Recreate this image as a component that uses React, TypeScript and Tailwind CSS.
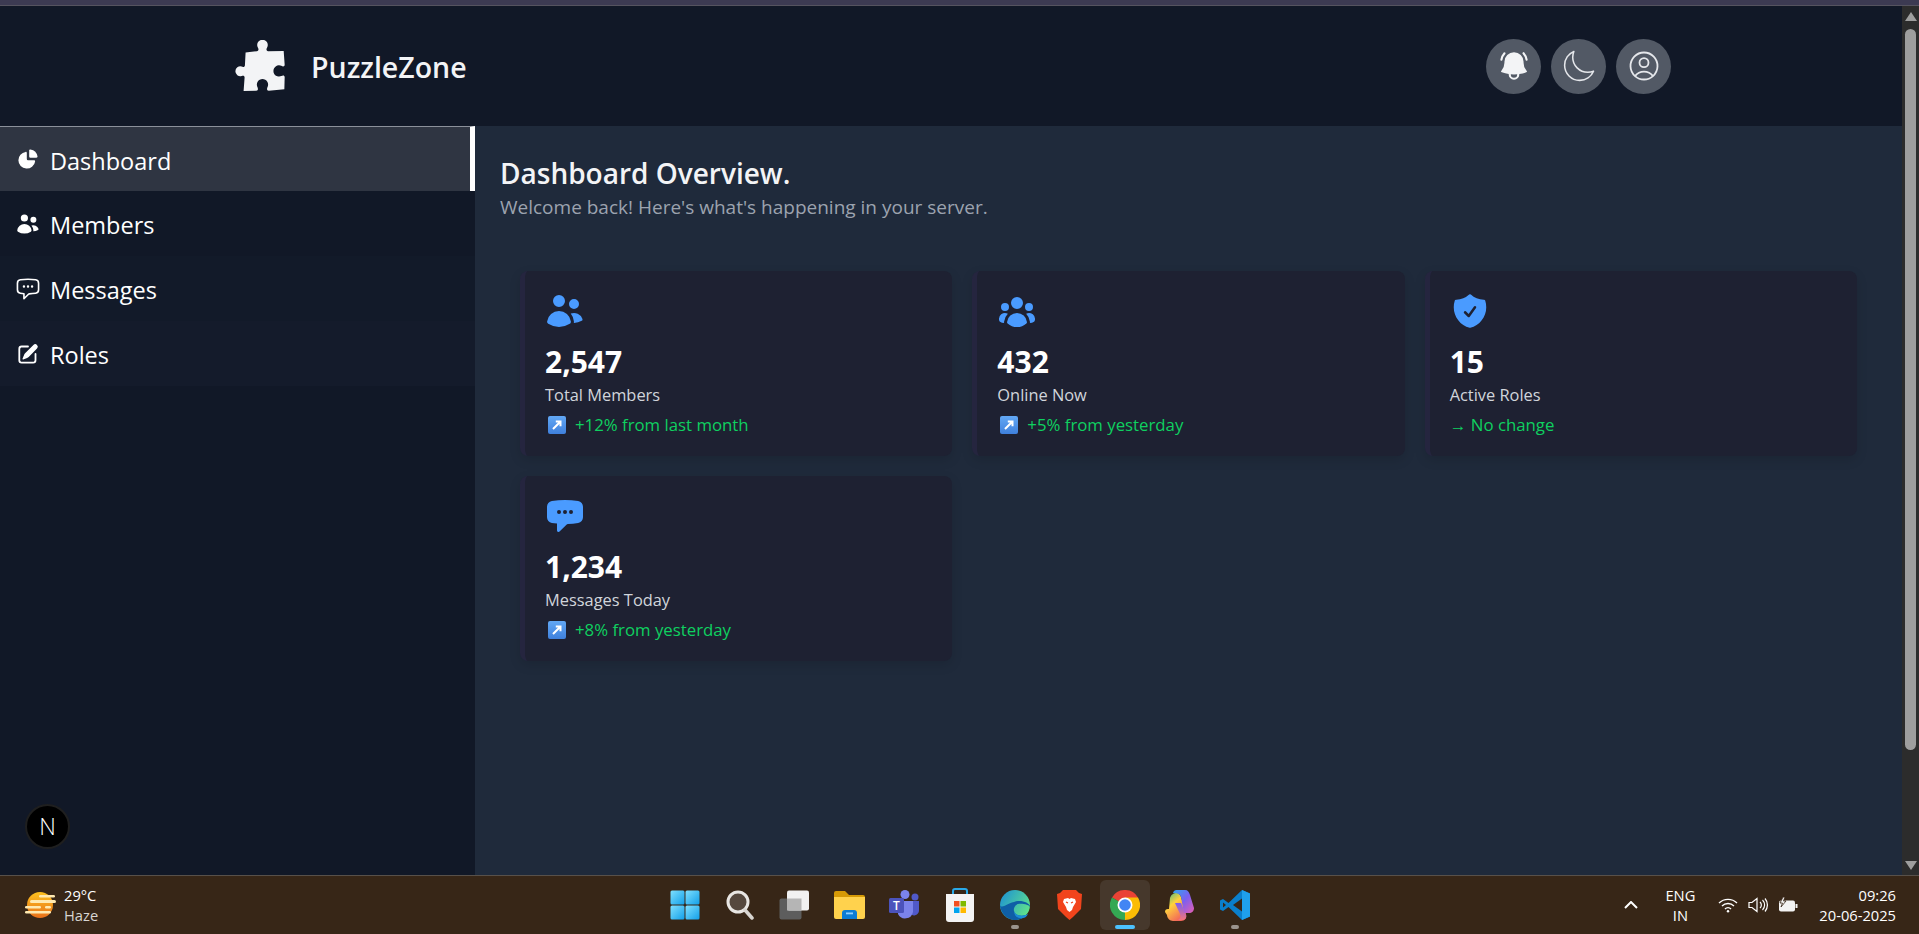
import React from "react";
import {
  HiMiniChartPie,
  HiMiniUsers,
  HiOutlineChatBubbleLeftEllipsis,
  HiMiniPencilSquare,
  HiMiniUserGroup,
  HiShieldCheck,
  HiMiniChatBubbleLeftEllipsis,
  HiBellAlert,
  HiOutlineMoon,
  HiOutlineUserCircle,
} from "react-icons/hi2";

const Puzzle = () => (
  <svg width="53" height="53" viewBox="700 115 160 160">
    <path
      d="M738 153L772 149C778 148 778 143 775 138A16 16 0 1 1 803 138C800 143 800 148 806 149L853 148L856 190C856 196 850 196 846 193A17 17 0 1 0 846 224C850 221 856 221 856 227L855 264L808 268C802 268 802 262 804 258A17 17 0 1 0 774 258C776 262 776 268 770 268L732 269L735 228C735 222 730 222 726 224A15 15 0 1 1 726 195C730 197 736 197 736 191Z"
      fill="#f3f4f6"
    />
  </svg>
);

const Up = () => (
  <svg width="18" height="18" viewBox="0 0 18 18" className="shrink-0">
    <defs>
      <linearGradient id="u" x1="0" y1="0" x2="0" y2="1">
        <stop offset="0" stopColor="#62a8f5" />
        <stop offset="1" stopColor="#3f80dc" />
      </linearGradient>
    </defs>
    <rect x="0" y="0" width="18" height="18" rx="2" fill="url(#u)" />
    <path d="M5 13L11.500 6.500M7.800 5.500H12.500V10.200" stroke="#fff" strokeWidth="2" fill="none" />
  </svg>
);

function Card({ icon, value, label, change, arrow }: { icon: React.ReactNode; value: string; label: string; change: string; arrow?: boolean }) {
  return (
    <div className="h-[185px] rounded-lg border-l-[5px] border-[#25253f] bg-[#1e2132] pl-[20px] pt-[20px] shadow-[0_4px_12px_rgba(0,0,0,0.12)]">
      <div className="h-[40px] text-[#4a9bff]">{icon}</div>
      <div className="mt-[13px] text-[30px] font-bold leading-[36px] text-white">{value}</div>
      <div className="mt-[3px] text-[16.400px] leading-[24px] text-[#d1d5db]">{label}</div>
      <div className="mt-[6px] flex h-[24px] items-center gap-[9px] pl-[3px] text-[16.800px] text-[#0fd060]">
        {arrow ? <Up /> : null}
        <span className={arrow ? "" : "-ml-[3px]"}>{change}</span>
      </div>
    </div>
  );
}

function NavItem({ icon, label, active, bg }: { icon: React.ReactNode; label: string; active?: boolean; bg?: string }) {
  return (
    <div className={`flex h-[65px] items-center pl-[16px] text-[23.500px] text-white ${active ? "border-r-[5px] border-t border-r-white border-t-[#8b909a] bg-[#2f3542]" : ""} ${bg ?? ""}`}>
      <span className="flex w-[34px] shrink-0 items-center">{icon}</span>
      <span className="pt-[5px]">{label}</span>
    </div>
  );
}

const RoundBtn = ({ children }: { children: React.ReactNode }) => (
  <div className="flex h-[55px] w-[55px] items-center justify-center rounded-full bg-[#525965] text-[#e5e7eb]">{children}</div>
);

const Slot = ({ children, active, dot }: { children: React.ReactNode; active?: boolean; dot?: boolean }) => (
  <div className={`relative flex h-[50px] w-[50px] items-center justify-center rounded-md ${active ? "bg-[#46382c]" : ""}`}>
    {children}
    {active ? <span className="absolute bottom-[1px] left-[15px] h-[4px] w-[20px] rounded-full bg-[#4cc2ff]" /> : null}
    {dot ? <span className="absolute bottom-[1px] left-[21px] h-[4px] w-[8px] rounded-full bg-[#9a938c]" /> : null}
  </div>
);

const Win = () => (
  <svg width="30" height="30" viewBox="0 0 30 30">
    <defs>
      <linearGradient id="w" x1="0" y1="0" x2="1" y2="1">
        <stop offset="0" stopColor="#7fe0ff" />
        <stop offset="1" stopColor="#129fe8" />
      </linearGradient>
    </defs>
    <rect x="0.500" y="0.500" width="14" height="14" rx="1.500" fill="url(#w)" />
    <rect x="15.500" y="0.500" width="14" height="14" rx="1.500" fill="url(#w)" />
    <rect x="0.500" y="15.500" width="14" height="14" rx="1.500" fill="url(#w)" />
    <rect x="15.500" y="15.500" width="14" height="14" rx="1.500" fill="url(#w)" />
  </svg>
);
const Search = () => (
  <svg width="28" height="30" viewBox="0 0 28 30">
    <circle cx="12" cy="12" r="10" fill="#55483e" stroke="#e8e6e3" strokeWidth="3" />
    <path d="M19 20l7 8" stroke="#d8d5d1" strokeWidth="3.500" strokeLinecap="round" />
  </svg>
);
const TaskView = () => (
  <svg width="31" height="30" viewBox="0 0 31 30">
    <rect x="0.500" y="8.500" width="22" height="21" rx="2" fill="#5d5d5d" />
    <rect x="8" y="0.500" width="22" height="20" rx="2" fill="#f1f1f1" />
    <rect x="8" y="8.500" width="14.500" height="12" fill="#b5b5b5" />
  </svg>
);
const Folder = () => (
  <svg width="31" height="28" viewBox="0 0 31 28">
    <path d="M0 2a2 2 0 0 1 2-2h9l4 4h14a2 2 0 0 1 2 2v4H0z" fill="#d69a06" />
    <path d="M0 6h31v20a2 2 0 0 1-2 2H2a2 2 0 0 1-2-2z" fill="#ffd24d" />
    <path d="M8 28v-6a3 3 0 0 1 3-3h9a3 3 0 0 1 3 3v6z" fill="#0c7cd5" />
    <rect x="12" y="21.500" width="7" height="1.800" fill="#8fd0ff" />
  </svg>
);
const Teams = () => (
  <svg width="31" height="30" viewBox="0 0 31 30">
    <circle cx="16" cy="4.500" r="4.500" fill="#7b83eb" />
    <circle cx="26" cy="7" r="3.500" fill="#5059c9" />
    <path d="M21 11h9v9a5 5 0 0 1-7 5z" fill="#5059c9" />
    <path d="M9 11h15v11a8 8 0 0 1-15 2z" fill="#7b83eb" />
    <rect x="0" y="8" width="15" height="15" rx="1.500" fill="#4b53bc" />
    <text x="7.500" y="20" textAnchor="middle" fontSize="12" fontFamily="Open Sans" fontWeight="600" fill="#fff">T</text>
  </svg>
);
const Store = () => (
  <svg width="30" height="34" viewBox="0 0 30 34">
    <path d="M8 8V3a2 2 0 0 1 2-2h10a2 2 0 0 1 2 2v5" fill="none" stroke="#2aa9e8" strokeWidth="2" />
    <path d="M1 6h28v25a3 3 0 0 1-3 3H4a3 3 0 0 1-3-3z" fill="#f4f4f4" />
    <rect x="9" y="13" width="5.500" height="5.500" fill="#f25022" />
    <rect x="15.500" y="13" width="5.500" height="5.500" fill="#7fba00" />
    <rect x="9" y="19.500" width="5.500" height="5.500" fill="#00a4ef" />
    <rect x="15.500" y="19.500" width="5.500" height="5.500" fill="#ffb900" />
  </svg>
);
const Edge = () => (
  <svg width="30" height="30" viewBox="0 0 30 30">
    <defs>
      <linearGradient id="e" x1="0" y1="0" x2="1" y2="0.600">
        <stop offset="0" stopColor="#1a8ed8" />
        <stop offset="1" stopColor="#5ee08c" />
      </linearGradient>
    </defs>
    <circle cx="15" cy="15" r="15" fill="url(#e)" />
    <path d="M0 15C1 26 10 31 17 30 c5-1 9-3 11-6-5 3-13 2-14-3-1-4 3-7 4-7 4-1 12 1 12 3 1-3-8-8-16-5C6 14 2 19 0 15z" fill="#0f5fa6" />
    <path d="M14 21c1 5 9 6 14 3-1 2-2 3-3 3.500-5 2-11 0-11-6.500z" fill="#1a8ed8" />
  </svg>
);
const Brave = () => (
  <svg width="25" height="30" viewBox="0 0 25 30">
    <path d="M6 0h13l3 3 3 1-1 15-8 8-3.500 3-3.500-3-8-8L0 4l3-1z" fill="#f1441c" />
    <path d="M7 9l4-1 1.500 1L14 8l4 1 1 3-3 5-1 3-2.500 2L10 20l-1-3-3-5z" fill="#fff" />
    <path d="M9 12l2 1M16 12l-2 1" stroke="#f1441c" strokeWidth="1.200" />
  </svg>
);
const Chrome = () => (
  <svg width="30" height="30" viewBox="0 0 30 30">
    <path d="M15 15L2 7.500A15 15 0 0 1 28 7.500z" fill="#ea4335" />
    <path d="M15 15l-13-7.500A15 15 0 0 0 15 30z" fill="#34a853" />
    <path d="M15 7.500h13A15 15 0 0 1 15 30z" fill="#fbbc05" />
    <circle cx="15" cy="15" r="7.500" fill="#fff" />
    <circle cx="15" cy="15" r="5.800" fill="#4285f4" />
  </svg>
);
const Copilot = () => (
  <svg width="29" height="31" viewBox="0 0 29 31">
    <defs>
      <linearGradient id="c1" x1="0" y1="0" x2="1" y2="1">
        <stop offset="0" stopColor="#2ea7f2" />
        <stop offset="0.500" stopColor="#7c5ff0" />
        <stop offset="1" stopColor="#e65fb0" />
      </linearGradient>
      <linearGradient id="c2" x1="0" y1="0" x2="0.600" y2="1">
        <stop offset="0" stopColor="#35b88a" />
        <stop offset="0.450" stopColor="#ffd23c" />
        <stop offset="1" stopColor="#f2655a" />
      </linearGradient>
      <linearGradient id="c3" x1="0" y1="0" x2="0" y2="1">
        <stop offset="0" stopColor="#7c5ff0" />
        <stop offset="1" stopColor="#f2757a" />
      </linearGradient>
    </defs>
    <path d="M5 8c1-3 3-5 7-5 2 0 3 2 4 4l5 17c1 4-1 7-5 7H8c-3 0-6-3-6-6L0 22c0-2 1-3 3-3h1z" fill="url(#c2)" />
    <path d="M10 13h6l5 12c1 3-1 5-4 5h-4c2-1 3-3 2-6z" fill="url(#c3)" />
    <path d="M8 3a4 4 0 0 1 4-3h8c3 0 4 2 5 5l4 13c0 3-2 5-5 5h-5L16 7c-1-3-3-4-8-4z" fill="url(#c1)" />
  </svg>
);
const VSCode = () => (
  <svg width="30" height="30" viewBox="0 0 30 30">
    <path d="M22 0l8 3.500v23L22 30 8.500 17 3 21 0 19.500v-9L3 9l5.500 4z" fill="#0a7fcc" />
    <path d="M22 0l8 3.500v23L22 30z" fill="#1fa0ec" />
    <path d="M22 8.500v13L13 15z" fill="#372617" />
    <path d="M3 12.500v5L6 15z" fill="#372617" />
  </svg>
);
const Sun = () => (
  <svg width="31" height="28" viewBox="0 0 31 28">
    <defs>
      <linearGradient id="s" x1="0" y1="0" x2="0" y2="1">
        <stop offset="0" stopColor="#fdc11f" />
        <stop offset="1" stopColor="#e8701a" />
      </linearGradient>
    </defs>
    <circle cx="15" cy="14" r="13" fill="url(#s)" />
    <rect x="14" y="4" width="16" height="2.500" rx="1.200" fill="#ffe9b0" />
    <rect x="5" y="9" width="26" height="3" rx="1.500" fill="#ffe9b0" />
    <rect x="0" y="15" width="16" height="2.500" rx="1.200" fill="#ffe9b0" />
    <rect x="20" y="15" width="6" height="2.500" rx="1.200" fill="#ffe9b0" />
    <rect x="0" y="20" width="26" height="2.500" rx="1.200" fill="#ffe9b0" />
  </svg>
);

export default function App() {
  return (
    <div className="flex h-[934px] w-[1919px] flex-col overflow-hidden bg-[#111827] font-['Open_Sans',sans-serif]">
      <div className="h-[6px] shrink-0 border-b border-[#55535f] bg-[#3c3a52]" />
      <div className="flex min-h-0 flex-1">
        <div className="flex min-w-0 flex-1 flex-col">
          <header className="flex h-[120px] shrink-0 items-center justify-between bg-[#111827] pl-[233px] pr-[231px]">
            <div className="flex items-center gap-[25px]">
              <Puzzle />
              <span className="mt-[2px] text-[28.500px] font-semibold text-[#f3f4f6]">PuzzleZone</span>
            </div>
            <div className="flex gap-[10px]">
              <RoundBtn><HiBellAlert size={34} color="#f3f4f6" /></RoundBtn>
              <RoundBtn><HiOutlineMoon size={37} strokeWidth={1} /></RoundBtn>
              <RoundBtn><HiOutlineUserCircle size={36} strokeWidth={1.200} /></RoundBtn>
            </div>
          </header>
          <div className="flex min-h-0 flex-1">
            <aside className="relative w-[475px] shrink-0 bg-[#111827]">
              <NavItem active icon={<HiMiniChartPie size={24} />} label="Dashboard" />
              <NavItem icon={<HiMiniUsers size={24} />} label="Members" />
              <NavItem icon={<HiOutlineChatBubbleLeftEllipsis size={26} className="-ml-[1px]" />} label="Messages" bg="bg-[#121a29]" />
              <NavItem icon={<HiMiniPencilSquare size={24} />} label="Roles" bg="bg-[#141b2b]" />
              <div className="absolute left-[25px] top-[678px] flex h-[45px] w-[45px] items-center justify-center rounded-full border-2 border-[#1f1f1f] bg-black text-[23px] font-light text-white">N</div>
            </aside>
            <main className="min-w-0 flex-1 bg-[#1f2a3b] px-[25px] pt-[27px]">
              <h1 className="text-[28px] font-semibold leading-[40px] text-[#f3f4f6]">Dashboard Overview.</h1>
              <p className="text-[19px] leading-[28px] text-[#9ca3af]">Welcome back! Here's what's happening in your server.</p>
              <div className="mt-[30px] grid grid-cols-3 gap-[20px] p-[20px]">
                <Card icon={<HiMiniUsers size={40} />} value="2,547" label="Total Members" change="+12% from last month" arrow />
                <Card icon={<HiMiniUserGroup size={40} />} value="432" label="Online Now" change="+5% from yesterday" arrow />
                <Card icon={<HiShieldCheck size={40} />} value="15" label="Active Roles" change="→ No change" />
                <Card icon={<HiMiniChatBubbleLeftEllipsis size={40} />} value="1,234" label="Messages Today" change="+8% from yesterday" arrow />
              </div>
            </main>
          </div>
        </div>
        <div className="flex w-[17px] shrink-0 flex-col items-center bg-[#2c2c2c] pb-[5px] pt-[6px]">
          <svg width="12" height="9" viewBox="0 0 12 9"><path d="M6 0l6 9H0z" fill="#9e9e9e" /></svg>
          <div className="mt-[8px] h-[721px] w-[11px] rounded-full bg-[#9e9e9e]" />
          <div className="flex-1" />
          <svg width="12" height="9" viewBox="0 0 12 9"><path d="M6 9L0 0h12z" fill="#9e9e9e" /></svg>
        </div>
      </div>
      <footer className="grid h-[59px] shrink-0 grid-cols-[1fr_auto_1fr] items-center border-t border-[#57504a] bg-[#372617] text-[14.700px] text-white">
        <div className="flex items-center gap-[8px] pl-[25px]">
          <Sun />
          <div className="leading-[20px]">
            <div>29°C</div>
            <div className="text-[#d8d5d1]">Haze</div>
          </div>
        </div>
        <div className="flex gap-[5px]">
          <Slot><Win /></Slot>
          <Slot><Search /></Slot>
          <Slot><TaskView /></Slot>
          <Slot><Folder /></Slot>
          <Slot><Teams /></Slot>
          <Slot><Store /></Slot>
          <Slot dot><Edge /></Slot>
          <Slot><Brave /></Slot>
          <Slot active><Chrome /></Slot>
          <Slot><Copilot /></Slot>
          <Slot dot><VSCode /></Slot>
        </div>
        <div className="flex items-center justify-end pr-[23px]">
          <svg width="14" height="8" viewBox="0 0 14 8" className="mr-[27px]"><path d="M1 7l6-6 6 6" fill="none" stroke="#fff" strokeWidth="2" /></svg>
          <div className="mr-[23px] text-center leading-[20px]">
            <div>ENG</div>
            <div>IN</div>
          </div>
          <svg width="20" height="16" viewBox="0 0 20 16" className="mr-[10px]" fill="none" stroke="#fff" strokeWidth="1.400">
            <path d="M1 6a13 13 0 0 1 18 0M4 9a8.500 8.500 0 0 1 12 0M7 12a4 4 0 0 1 6 0" />
            <circle cx="10" cy="14.300" r="1.200" fill="#fff" stroke="none" />
          </svg>
          <svg width="20" height="16" viewBox="0 0 20 16" className="mr-[10px]" fill="none" stroke="#fff" strokeWidth="1.200">
            <path d="M1 5.500h3L9 1.500v13L4 10.500H1z" />
            <path d="M12 5a4 4 0 0 1 0 6M14.500 3a7 7 0 0 1 0 10M17 1.500a10 10 0 0 1 0 13" />
          </svg>
          <svg width="20" height="16" viewBox="0 0 20 16" className="mr-[21px]">
            <rect x="1" y="3.500" width="16" height="11" rx="2" fill="#f3f3f3" />
            <rect x="17.500" y="7" width="2" height="4" fill="#f3f3f3" />
            <path d="M5 0L2 6h2.500L3 10l5-6H5.500L7 0z" fill="#f3f3f3" stroke="#372617" strokeWidth="0.800" />
          </svg>
          <div className="text-right leading-[20px]">
            <div>09:26</div>
            <div>20-06-2025</div>
          </div>
        </div>
      </footer>
    </div>
  );
}
